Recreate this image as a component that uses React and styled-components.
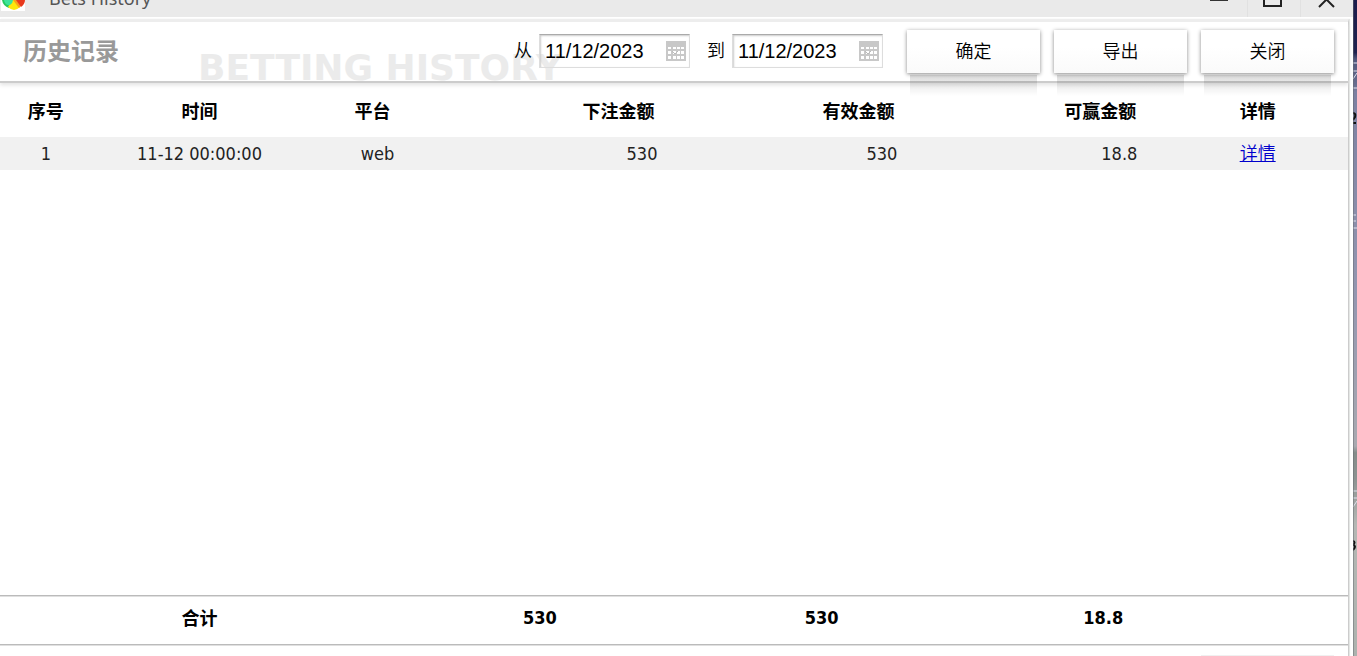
import React, { useState } from 'react'
import styled, { createGlobalStyle } from 'styled-components'

const GlobalStyle = createGlobalStyle`
  * {
    box-sizing: border-box;
  }
  body {
    margin: 0;
    background: #fff;
    color: #000;
    font-family: 'DejaVu Sans Condensed', 'Noto Sans CJK SC', sans-serif;
    font-size: 18px;
  }
  button, input {
    font: inherit;
    color: inherit;
  }
`

const Desktop = styled.div`
  display: flex;
  height: 100vh;
  overflow: hidden;
`

const Popup = styled.div`
  flex: 1;
  min-width: 0;
  display: flex;
  flex-direction: column;
  background: #fff;
`

const Backdrop = styled.svg`
  flex: none;
  width: 4px;
  height: 100%;
`

const TitleBar = styled.div`
  flex: none;
  display: flex;
  align-items: flex-end;
  height: 17px;
  overflow: hidden;
  background: #eaeaea;
`

const WindowTitle = styled.div`
  flex: 1;
  padding-left: 23px;
  line-height: 38px;
  color: #555;
  font-family: 'Noto Sans', sans-serif;
`

const WindowButton = styled.button`
  width: 53px;
  height: 17px;
  padding: 0;
  border: 0;
  border-left: 1px solid ${props => (props.$divided ? '#e1e1e1' : 'transparent')};
  background: none;

  svg {
    display: block;
  }
`

const Page = styled.main`
  flex: 1;
  min-height: 0;
  display: flex;
  flex-direction: column;
  margin: 2px 4px 0 0;
  border-top: 3px solid #eee;
  border-right: 1px solid #ccc;
  box-shadow: 1px 0 1px #e4e6e4;
`

const Header = styled.header`
  position: relative;
  z-index: 0;
  flex: none;
  display: flex;
  align-items: center;
  height: 61px;
  padding: 0 14px 0 23px;
  border-bottom: 2px solid #ccc;
  box-shadow: 0 2px 4px #e2e2e2;
`

const Heading = styled.h1`
  flex: 1;
  margin: 0;
  color: #999;
  font-size: 24px;
  line-height: 32px;
`

const Watermark = styled.div`
  position: absolute;
  left: 198px;
  bottom: -8px;
  color: #ebebeb;
  font-family: 'DejaVu Sans', sans-serif;
  font-size: 36px;
  font-weight: bold;
  line-height: 42px;
  white-space: nowrap;
  z-index: -1;
`

const Filter = styled.form`
  display: flex;
  align-items: center;
  gap: 14px;
`

const Dates = styled.div`
  display: flex;
  gap: 17px;
  padding: 0 10px 2px 0;
`

const DateLabel = styled.label`
  display: flex;
  align-items: center;
  gap: 7px;
  font-weight: 350;
  line-height: 24px;
`

const DateBox = styled.span`
  display: flex;
  align-items: center;
  width: 151px;
  height: 34px;
  padding: 0 3px 0 5px;
  border: 1px solid #ddd;
  border-top-color: #aaa;
  box-shadow: inset 1px 1px 2px #ccc;

  input {
    flex: 1;
    min-width: 0;
    padding: 0;
    border: 0;
    outline: 0;
    background: none;
    font-family: 'Liberation Sans', sans-serif;
    font-size: 20px;
    font-weight: 400;
  }
`

const Button = styled.button`
  position: relative;
  width: 133px;
  height: 43px;
  padding: 0 0 4px;
  border: 0;
  background: linear-gradient(#fff 40%, #fafafa);
  box-shadow: 0 1px 4px #888;
  font-weight: 350;

  /* soft reflection that falls over the line below */
  &::after {
    content: '';
    position: absolute;
    top: 45px;
    left: 3px;
    right: 3px;
    height: 21px;
    background: linear-gradient(rgba(0, 0, 0, 0.14), rgba(0, 0, 0, 0));
  }
`

const TableArea = styled.section`
  flex: 1;
  min-height: 0;
  overflow: hidden;
`

const Table = styled.table`
  width: 100%;
  table-layout: fixed;
  border-collapse: collapse;
`

const HeadCell = styled.th`
  height: 54px;
  padding: 0 ${props => props.$indent || 0}px 0 0;
  text-align: ${props => (props.$right ? 'right' : 'center')};
`

const Cell = styled.td`
  height: 33px;
  padding: ${props => (props.$right ? '0 30px 0 0' : '0')};
  background: #f1f1f1;
  color: #222;
  text-align: ${props => (props.$right ? 'right' : 'center')};
  line-height: 24px;
`

const DetailLink = styled.a`
  color: #0000cc;
  font-weight: 350;
`

const Totals = styled(Table)`
  flex: none;
  border-collapse: separate;
  border-spacing: 0;
  border-top: 1px solid #bbb;
  border-bottom: 1px solid #bbb;
  box-shadow: inset 0 1px #e0e0e0, 0 1px #e0e0e0;

  td {
    height: 48px;
    padding: 0 0 6px;
    font-weight: bold;
    text-align: center;
  }
`

const Pager = styled.footer`
  flex: none;
  display: flex;
  justify-content: flex-end;
  height: 11px;
  padding: 10px 14px 0;
  overflow: hidden;
`

const PagerEdge = styled.div`
  width: 133px;
  height: 43px;
  background: #f0f0f0;
`

const columns = [
  { name: '序号', width: '6.8%' },
  { name: '时间', width: '16%' },
  { name: '平台', width: '10.4%', indent: 10 },
  { name: '下注金额', width: '17.8%', right: true, indent: 33 },
  { name: '有效金额', width: '17.8%', right: true, indent: 33 },
  { name: '可赢金额', width: '17.8%', right: true, indent: 31 },
  { name: '详情', width: '13.4%' }
]

const bets = [
  { id: 1, time: '11-12 00:00:00', platform: 'web', stake: '530', valid: '530', win: '18.8' }
]

const Logo = () => (
  <svg width='26' height='17' viewBox='0 0 26 17'>
    <path d='M1 0H25V11H1Z' fill='#fff' />
    <path d='M2 0Q3 6 9 8L13 0Z' fill='#26c95f' />
    <path d='M8 7Q14 13 20 7L13 -1Z' fill='#fde80b' />
    <path d='M13 0L19 8Q22 6 22 0Z' fill='#f9a11b' />
    <path d='M16 0L21 7Q25 4 25 0Z' fill='#e8391d' />
    <path d='M4 0Q5 6 10 5Q13 3 13 0Z' fill='#3de39a' />
  </svg>
)

const CalendarIcon = () => (
  <svg width='20' height='20' viewBox='0 0 20 20'>
    <path d='M0 0H20V20H0Z' fill='#c8c8c8' />
    <path
      d='M2 6h3v2h-3zM7 6h3v2h-3zM11 6h3v2h-3zM15 6h3v2h-3zM2 10h3v3h-3zM7 10h3v3h-3zM11 10h3v3h-3zM15 10h3v3h-3zM2 15h3v3h-3zM7 15h3v3h-3zM11 15h3v3h-3zM15 15h3v3h-3z'
      fill='#fff'
    />
    <path d='M6 10l3 3 3-3' fill='none' stroke='#bbb' />
  </svg>
)

const DateField = props => {
  const { label, initial } = props
  const [value, setValue] = useState(initial)

  return (
    <DateLabel>
      {label}
      <DateBox>
        <input type='text' value={value} onChange={e => setValue(e.target.value)} />
        <CalendarIcon />
      </DateBox>
    </DateLabel>
  )
}

// the slice of desktop that shows beside the popup
const DesktopEdge = () => (
  <Backdrop>
    <defs>
      <linearGradient id='edge' x1='0' y1='0' x2='0' y2='1'>
        <stop offset='0' stopColor='#1b1c4c' />
        <stop offset='0.08' stopColor='#20224f' />
        <stop offset='0.09' stopColor='#50557c' />
        <stop offset='0.13' stopColor='#6a6e90' />
        <stop offset='0.14' stopColor='#7d80a2' />
        <stop offset='0.45' stopColor='#9496b0' />
        <stop offset='0.68' stopColor='#a9a9b0' />
        <stop offset='0.69' stopColor='#858c8a' />
        <stop offset='0.73' stopColor='#8c9291' />
        <stop offset='0.8' stopColor='#b5b7b4' />
        <stop offset='1' stopColor='#adb2ae' />
      </linearGradient>
    </defs>
    <rect width='4' height='100%' fill='url(#edge)' />
    <path d='M0 63h4M0 71h4M4 73l-4 6M0 88h4M0 215h3M0 221h3M0 228h4M0 491h4M0 498h4M4 501l-4 6' stroke='#dfe0ee' fill='none' />
    <path d='M0 113q3 0 2 4l-2 3M0 123h3M0 541q3 1 0 4q4 1 0 5' stroke='#111' strokeWidth='2' fill='none' />
    <path d='M0 0V656' stroke='#666b70' strokeWidth='1' />
  </Backdrop>
)

export default function App () {
  return (
    <Desktop>
      <GlobalStyle />
      <Popup>
        <TitleBar>
          <Logo />
          <WindowTitle>Bets History</WindowTitle>
          <WindowButton aria-label='Minimize'>
            <svg width='52' height='17'><path d='M15 0H33' stroke='#333' strokeWidth='2' /></svg>
          </WindowButton>
          <WindowButton $divided aria-label='Maximize'>
            <svg width='52' height='17'><path d='M16 -9V6H33V-9' fill='none' stroke='#222' strokeWidth='2' /></svg>
          </WindowButton>
          <WindowButton $divided aria-label='Close'>
            <svg width='52' height='17'><path d='M18 7L33 -8M33 7L18 -8' stroke='#222' strokeWidth='2' /></svg>
          </WindowButton>
        </TitleBar>
        <Page>
          <Header>
            <Watermark>BETTING HISTORY</Watermark>
            <Heading>历史记录</Heading>
            <Filter onSubmit={e => e.preventDefault()}>
              <Dates>
                <DateField label='从' initial='11/12/2023' />
                <DateField label='到' initial='11/12/2023' />
              </Dates>
              <Button type='submit'>确定</Button>
              <Button type='button'>导出</Button>
              <Button type='button'>关闭</Button>
            </Filter>
          </Header>
          <TableArea>
            <Table>
              <colgroup>
                {columns.map(col => <col key={col.name} style={{ width: col.width }} />)}
              </colgroup>
              <thead>
                <tr>
                  {columns.map(col => (
                    <HeadCell key={col.name} $right={col.right} $indent={col.indent}>{col.name}</HeadCell>
                  ))}
                </tr>
              </thead>
              <tbody>
                {bets.map(bet => (
                  <tr key={bet.id}>
                    <Cell>{bet.id}</Cell>
                    <Cell>{bet.time}</Cell>
                    <Cell>{bet.platform}</Cell>
                    <Cell $right>{bet.stake}</Cell>
                    <Cell $right>{bet.valid}</Cell>
                    <Cell $right>{bet.win}</Cell>
                    <Cell><DetailLink href='#detail'>详情</DetailLink></Cell>
                  </tr>
                ))}
              </tbody>
            </Table>
          </TableArea>
          <Totals>
            <colgroup>
              <col style={{ width: '29.6%' }} />
              <col style={{ width: '20.9%' }} />
              <col style={{ width: '20.9%' }} />
              <col style={{ width: '20.9%' }} />
              <col />
            </colgroup>
            <tbody>
              <tr>
                <td>合计</td>
                <td>530</td>
                <td>530</td>
                <td>18.8</td>
                <td />
              </tr>
            </tbody>
          </Totals>
          <Pager>
            <PagerEdge />
          </Pager>
        </Page>
      </Popup>
      <DesktopEdge />
    </Desktop>
  )
}
